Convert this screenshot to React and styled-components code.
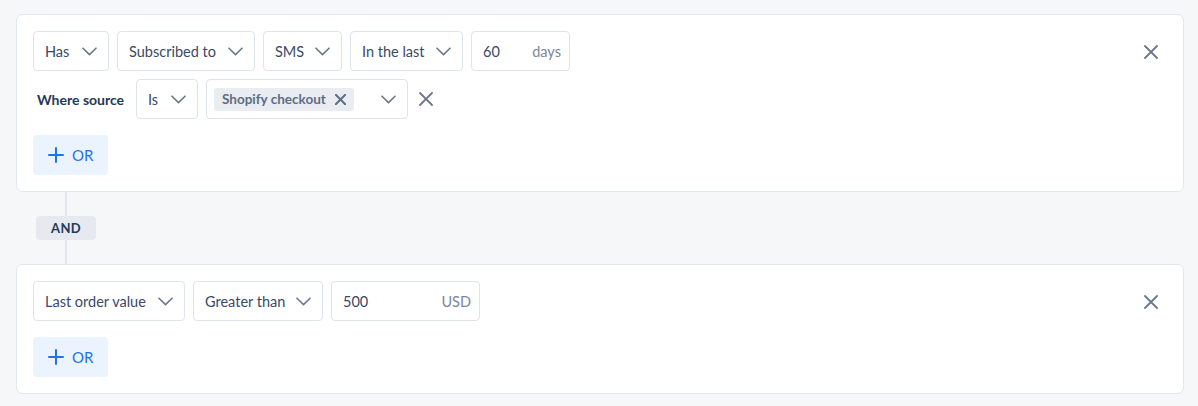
import React from 'react';
import styled, { createGlobalStyle } from 'styled-components';

const GlobalStyle = createGlobalStyle`
  html, body {
    margin: 0;
    padding: 0;
    background: #f6f7f9;
  }
  body {
    font-family: Lato, "Liberation Sans", sans-serif;
    -webkit-font-smoothing: antialiased;
  }
`;

const Page = styled.div`
  padding: 14px 14px 12px 16px;
  display: flex;
  flex-direction: column;
`;

const Card = styled.div`
  background: #ffffff;
  border: 1px solid #e2e6ed;
  border-radius: 6px;
  padding: 16px;
  display: flex;
  justify-content: space-between;
  align-items: flex-start;
`;

const Body = styled.div`
  display: flex;
  flex-direction: column;
  gap: 8px;
`;

const Row = styled.div`
  display: flex;
  align-items: center;
  gap: 8px;
`;

const Box = styled.div`
  box-sizing: border-box;
  width: ${p => p.w}px;
  height: 40px;
  border: 1px solid #dfe3ea;
  border-radius: 4px;
  background: #fff;
  display: flex;
  align-items: center;
  justify-content: space-between;
  padding: ${p => (p.input ? '0 8px 0 11px' : '0 11px')};
  font-size: 14.5px;
  color: #3a4966;
`;

const Suffix = styled.span`
  color: #7a869a;
`;

const Label = styled.div`
  box-sizing: border-box;
  width: 95px;
  padding-left: 4px;
  font-size: 14px;
  font-weight: 700;
  color: #253858;
`;

const Tag = styled.div`
  height: 23px;
  display: flex;
  align-items: center;
  gap: 9px;
  padding: 0 8px;
  background: #e9edf2;
  border-radius: 3px;
  font-size: 13.5px;
  font-weight: 700;
  color: #5e6c84;
`;

const MultiLeft = styled.div`
  display: flex;
  align-items: center;
  margin-left: -4px;
`;

const IconButton = styled.button`
  border: 0;
  background: transparent;
  padding: 0;
  width: ${p => p.w || 20}px;
  height: ${p => p.h || 40}px;
  display: flex;
  align-items: center;
  justify-content: center;
  color: #6b778c;
  cursor: pointer;
`;

const OrButton = styled.button`
  box-sizing: border-box;
  margin-top: 8px;
  width: 75px;
  height: 40px;
  border: 0;
  border-radius: 4px;
  background: #ebf3fe;
  color: #1f74ee;
  display: flex;
  align-items: center;
  gap: 8px;
  padding: 0 0 0 15px;
  font-family: inherit;
  font-size: 15px;
  cursor: pointer;
`;

const Connector = styled.div`
  width: 60px;
  height: 72px;
  margin-left: 20px;
  display: flex;
  flex-direction: column;
  align-items: center;
`;

const Line = styled.div`
  flex: 1;
  width: 2px;
  background: #e1e6ee;
`;

const AndBadge = styled.div`
  box-sizing: border-box;
  width: 60px;
  height: 24px;
  border-radius: 4px;
  background: #e6eaf0;
  color: #253858;
  font-size: 13px;
  font-weight: 700;
  letter-spacing: 0.3px;
  display: flex;
  align-items: center;
  justify-content: center;
`;

const Chevron = () => (
  <svg width="15" height="9" viewBox="0 0 15 9" fill="none">
    <polyline points="1,1.2 7.5,7.6 14,1.2" stroke="#6b778c" strokeWidth="1.6" strokeLinecap="round" strokeLinejoin="round" />
  </svg>
);

const Cross = ({ size = 14, stroke = 1.8, color = 'currentColor' }) => (
  <svg width={size} height={size} viewBox="0 0 14 14" fill="none">
    <path d="M1 1L13 13M13 1L1 13" stroke={color} strokeWidth={stroke * 14 / size} strokeLinecap="round" />
  </svg>
);

const Plus = () => (
  <svg width="16" height="16" viewBox="0 0 16 16" fill="none">
    <path d="M8 1V15M1 8H15" stroke="#1f74ee" strokeWidth="2" strokeLinecap="round" />
  </svg>
);

const Select = ({ w, children }) => (
  <Box w={w}>
    <span>{children}</span>
    <Chevron />
  </Box>
);

const NumberInput = ({ w, value, unit }) => (
  <Box w={w} input>
    <span>{value}</span>
    <Suffix>{unit}</Suffix>
  </Box>
);

const AddOr = () => (
  <OrButton>
    <Plus />
    OR
  </OrButton>
);

export default function App() {
  return (
    <>
      <GlobalStyle />
      <Page>
        <Card>
          <Body>
            <Row>
              <Select w={76}>Has</Select>
              <Select w={138}>Subscribed to</Select>
              <Select w={79}>SMS</Select>
              <Select w={113}>In the last</Select>
              <NumberInput w={99} value="60" unit="days" />
            </Row>
            <Row>
              <Label>Where source</Label>
              <Select w={62}>Is</Select>
              <Box w={202}>
                <MultiLeft>
                  <Tag>
                    Shopify checkout
                    <Cross size={11} stroke={2} color="#5e6c84" />
                  </Tag>
                </MultiLeft>
                <Chevron />
              </Box>
              <IconButton w={20}>
                <Cross size={14} stroke={1.8} />
              </IconButton>
            </Row>
            <AddOr />
          </Body>
          <IconButton w={32} h={42}>
            <Cross size={14} stroke={1.8} />
          </IconButton>
        </Card>

        <Connector>
          <Line />
          <AndBadge>AND</AndBadge>
          <Line />
        </Connector>

        <Card>
          <Body>
            <Row>
              <Select w={152}>Last order value</Select>
              <Select w={130}>Greater than</Select>
              <NumberInput w={149} value="500" unit="USD" />
            </Row>
            <AddOr />
          </Body>
          <IconButton w={32} h={42}>
            <Cross size={14} stroke={1.8} />
          </IconButton>
        </Card>
      </Page>
    </>
  );
}
